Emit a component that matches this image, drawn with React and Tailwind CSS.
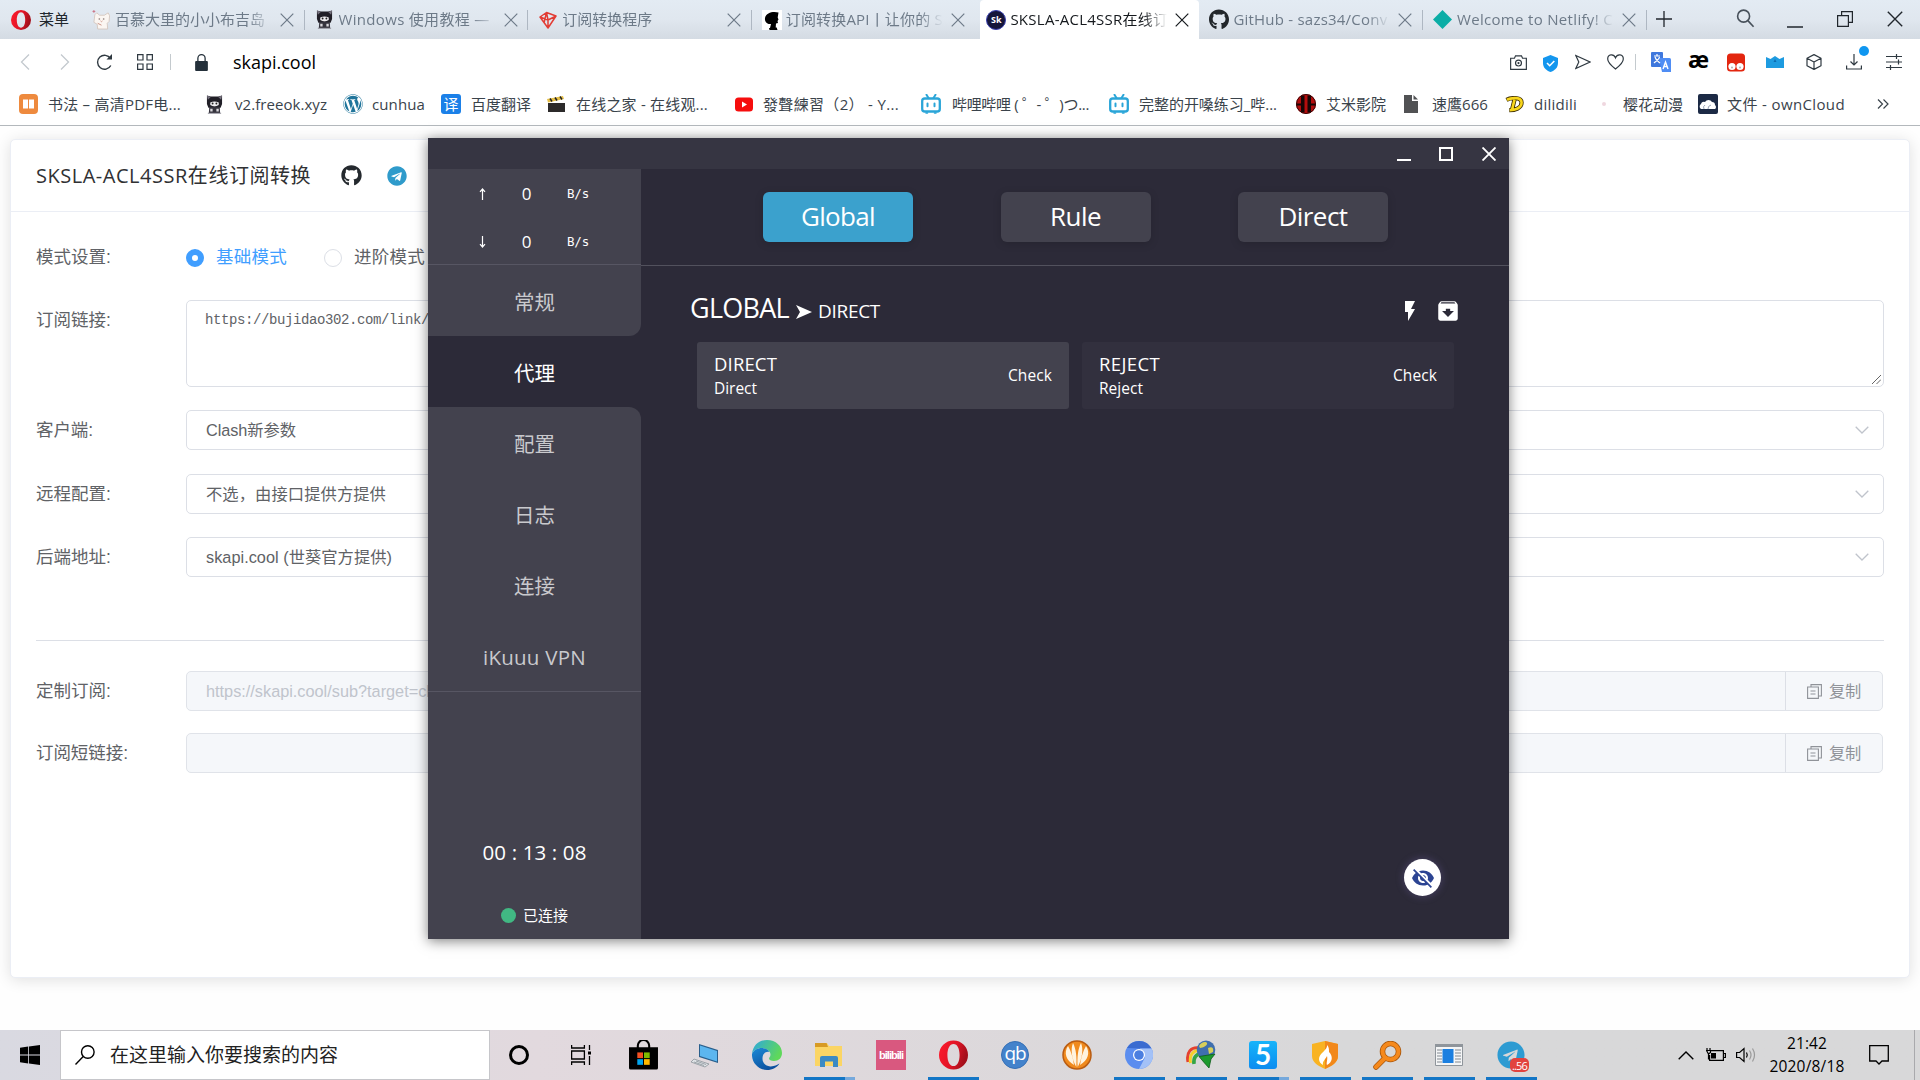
import React, { useLayoutEffect, useRef } from "react";
import { FaGithub, FaWordpress, FaTelegram } from "react-icons/fa";
import { MdFlashOn, MdArchive, MdVisibilityOff } from "react-icons/md";

/* A single line of text whose letter spacing is computed to fill `w` pixels. */
function Fit({ w, className = "", children }) {
  const ref = useRef(null);
  useLayoutEffect(() => {
    const el = ref.current;
    el.style.letterSpacing = "0px";
    const natural = el.getBoundingClientRect().width;
    const count = Array.from(el.textContent).length;
    el.style.letterSpacing = `${(w - natural) / count}px`;
  }, [w, children]);
  return (
    <span ref={ref} className={"inline-block shrink-0 whitespace-pre " + className}>
      {children}
    </span>
  );
}

function Cross({ className = "" }) {
  return (
    <svg viewBox="0 0 14 14" className={className} fill="none" stroke="currentColor" strokeWidth="1.2">
      <path d="M.7.7l12.6 12.6M13.3.7L.7 13.3" />
    </svg>
  );
}

function OperaO({ className }) {
  return (
    <svg viewBox="0 0 30 30" className={className}>
      <defs>
        <linearGradient id="op" x1="0" y1="0" x2="1" y2="0.3">
          <stop offset="0" stopColor="#ff1b2d" />
          <stop offset=".6" stopColor="#e01426" />
          <stop offset="1" stopColor="#a30f1b" />
        </linearGradient>
      </defs>
      <path fillRule="evenodd" fill="url(#op)" d="M15 0a15 15 0 1 0 0 30a15 15 0 1 0 0-30zM15 3.500c4 0 6.300 5 6.300 11.500s-2.300 11.500-6.300 11.500s-6.300-5-6.300-11.500S11 3.500 15 3.500z" />
    </svg>
  );
}

function CatDark({ className }) {
  return (
    <svg viewBox="0 0 18 20" className={className}>
      <path d="M1 .5l4 1h8l4-1v9l-1.500 4h-13L1 9.500z" fill="#211f27" />
      <path d="M1 .5L5 2 2 5zM17 .5L13 2l3 3z" fill="#77737f" />
      <path d="M4.500 8q4.500-2.500 9 0v2.500q-4.500 3-9 0z" fill="#efedf0" />
      <circle cx="7" cy="9" r="1" fill="#222" />
      <circle cx="11" cy="9" r="1" fill="#222" />
      <path d="M3.500 12.500h11l.5 6.500H3z" fill="#35333d" />
      <path d="M4.500 14.500h2.500v3H4.500zM11 14.500h2.500v3H11z" fill="#d9d7dc" />
      <path d="M2 19.300h14" stroke="#8b8994" />
    </svg>
  );
}

function BiliTv() {
  return (
    <svg viewBox="0 0 20 20" className="w-5 h-5" fill="none" stroke="#2aa5d8" strokeLinecap="round">
      <path d="M5.500.8L7.500 4M14.500.8L12.500 4" strokeWidth="2" />
      <rect x="1.200" y="4.500" width="17.600" height="13" rx="2.600" strokeWidth="2.300" />
      <path d="M6.500 9.500v2.800M13.500 9.500v2.800" strokeWidth="2" />
      <path d="M5 19h1.500M13.500 19H15" strokeWidth="1.500" />
    </svg>
  );
}

const tabIcons = {
  whiteCat: (
    <svg viewBox="0 0 20 22" className="w-[19px] h-[21px]">
      <path d="M3 6l2-2 3 2.500h5L17 4l1.500 3-.5 6-2 2 .5 6H6l-.5-5L2 14z" fill="#fbf6f2" stroke="#cfc0b6" strokeWidth=".8" />
      <path d="M7 10.500h1.500M11.500 10.500H13" stroke="#6b5750" strokeWidth="1.200" />
      <path d="M9 12.500l1 .8 1-.8M6 15l4 2" stroke="#c98f82" fill="none" />
      <path d="M2 1v3M.5 2.500h3" stroke="#c96a7d" strokeWidth=".9" />
    </svg>
  ),
  cat: <CatDark className="w-[17px] h-[19px]" />,
  gem: (
    <svg viewBox="0 0 18 18" className="w-[18px] h-[18px]" fill="none" stroke="#e23c34" strokeWidth="1.500" strokeLinejoin="round">
      <path d="M7.500 1.500L17 5 9 17 1 6zM1 6l8 3 8-4M7.500 1.500L9 9v8M7.500 1.500L5 12" />
    </svg>
  ),
  head: (
    <svg viewBox="0 0 20 20" className="w-5 h-5">
      <rect width="20" height="20" fill="#fff" />
      <path d="M16.500 2.500C12 1 4 2 3 8c-.6 4 2.500 6.500 6 6l-1 4h-1l.5 2h8l-.8-2.500h-1l.3-4L16 13l-.5-2 1-1.500-.8-2z" fill="#000" />
    </svg>
  ),
  sk: (
    <span className="flex items-center justify-center w-5 h-5 rounded-full bg-[#15163a] border-[1.5px] border-[#3a40b0] text-white text-[9px] font-bold leading-none">
      Sk
    </span>
  ),
  github: <FaGithub className="w-[21px] h-[21px] text-[#22272b]" />,
  netlify: (
    <svg viewBox="0 0 18 18" className="w-[19px] h-[19px]">
      <path d="M9 0l9 9-9 9-9-9z" fill="#0bada6" />
    </svg>
  ),
};

const tabs = [
  { icon: "whiteCat", text: "百慕大里的小小布吉岛", w: 150 },
  { icon: "cat", text: "Windows 使用教程 —", w: 151 },
  { icon: "gem", text: "订阅转换程序", w: 90 },
  { icon: "head", text: "订阅转换API丨让你的 S", w: 157 },
  { icon: "sk", text: "SKSLA-ACL4SSR在线订", w: 158, active: true },
  { icon: "github", text: "GitHub - sazs34/Conv", w: 154 },
  { icon: "netlify", text: "Welcome to Netlify! C", w: 156 },
];

function TabBar() {
  return (
    <div className="flex h-[39px] shrink-0 bg-linear-to-b from-[#e3ebf3] via-[#e0e7ef] to-[#d4dbe3]">
      <div className="flex items-center w-[81px] pl-[11px] gap-2 text-[15px] text-[#20262c]">
        <OperaO className="w-5 h-5" />
        <Fit w={30}>菜单</Fit>
      </div>
      {tabs.map((t, i) => (
        <div
          key={i}
          className={
            "flex items-center h-[39px] shrink-0 " +
            (t.active
              ? "ml-[5px] w-[219px] bg-white text-[#15191d] rounded-t-sm"
              : "w-[223.6px] text-[#6d7a88]")
          }
        >
          <span className={"flex justify-center w-5 shrink-0 " + (t.active ? "ml-[6px]" : "ml-[10px]")}>{tabIcons[t.icon]}</span>
          <span className="ml-1 mr-[8px] w-[157px] shrink-0 overflow-hidden text-[15px] leading-none py-1 mask-r-from-85%">
            <Fit w={t.w}>{t.text}</Fit>
          </span>
          <Cross className="w-[14px] h-[14px] shrink-0" />
          {!t.active && i !== 3 && <span className="ml-auto w-px h-5 bg-[#aeb7c2]" />}
        </div>
      ))}
      <div className="flex items-center flex-1 text-[#20262c]">
        <svg viewBox="0 0 16 16" className="w-4 h-4 ml-[9px] mb-px" stroke="currentColor" strokeWidth="1.300">
          <path d="M8 0v16M0 8h16" />
        </svg>
        <svg viewBox="0 0 20 20" className="w-[19px] h-[19px] ml-16 mb-[3px]" fill="none" stroke="#47505a" strokeWidth="1.700">
          <circle cx="8" cy="7.500" r="6.300" />
          <path d="M12.500 12.200l6 6.500" />
        </svg>
        <svg viewBox="0 0 16 16" className="w-4 h-4 ml-8" stroke="currentColor" strokeWidth="1.500">
          <path d="M0 15h16" />
        </svg>
        <svg viewBox="0 0 16 16" className="w-4 h-4 ml-[34px] mb-[1px]" fill="none" stroke="currentColor" strokeWidth="1.200">
          <path d="M.6 4.600h10.800v10.800H.6zM4.600 4.600V.6h10.800v10.800h-4" />
        </svg>
        <Cross className="w-4 h-4 ml-[34px] mb-[1px]" />
      </div>
    </div>
  );
}

function AddressBar() {
  return (
    <div className="flex items-center h-[47px] shrink-0 bg-white text-[#2f3941] pb-px">
      <svg viewBox="0 0 10 16" className="w-[10px] h-4 ml-5" fill="none" stroke="#c3c9ce" strokeWidth="1.300">
        <path d="M9 .5L1.500 8 9 15.500" />
      </svg>
      <svg viewBox="0 0 10 16" className="w-[10px] h-4 ml-[30px]" fill="none" stroke="#c3c9ce" strokeWidth="1.300">
        <path d="M1 .5L8.500 8 1 15.500" />
      </svg>
      <svg viewBox="0 0 17 17" className="w-[17px] h-[17px] ml-[26px]" fill="none" stroke="currentColor" strokeWidth="1.400">
        <path d="M14.800 11.500A7 7 0 1 1 14.500 4.500" />
        <path d="M10.500 5.500H16V0z" fill="currentColor" stroke="none" />
      </svg>
      <svg viewBox="0 0 16 16" className="w-4 h-4 ml-6" fill="none" stroke="currentColor" strokeWidth="1.200">
        <path d="M.6.6h5.400v5.400H.6zM10 .6h5.400v5.400H10zM.6 10h5.400v5.400H.6zM10 10h5.400v5.400H10z" />
      </svg>
      <span className="w-px h-4 ml-[17px] bg-[#c4cace]" />
      <svg viewBox="0 0 12 16" className="w-[13px] h-[17px] ml-6">
        <rect y="6.500" width="12" height="9.500" rx="1" fill="#24303a" />
        <path d="M2.600 7V4a3.400 3.400 0 0 1 6.800 0v3" fill="none" stroke="#24303a" strokeWidth="1.200" />
      </svg>
      <span className="ml-[25px] text-[18px] leading-none text-black">
        <Fit w={83}>skapi.cool</Fit>
      </span>
      <div className="ml-auto flex items-center">
        <svg viewBox="0 0 16 14" className="w-[17px] h-[15px]" fill="none" stroke="currentColor" strokeWidth="1.100">
          <path d="M.6 3h3.600l1-2.300h5.600l1 2.300h3.600v10.400H.6z" />
          <circle cx="8" cy="7.500" r="2.800" />
          <circle cx="8" cy="7.500" r=".5" />
        </svg>
        <svg viewBox="0 0 15 17" className="w-[15px] h-[17px] ml-4 mt-[2px]">
          <path d="M7.500 0l7.500 3v5c0 5-3.500 7.600-7.500 9C3.500 15.600 0 13 0 8V3z" fill="#1496ee" />
          <path d="M4 8l2.700 2.700L11.300 6" stroke="#fff" strokeWidth="1.600" fill="none" />
        </svg>
        <svg viewBox="0 0 16 16" className="w-4 h-4 ml-[17px]" fill="none" stroke="currentColor" strokeWidth="1.200">
          <path d="M.8 1.500L15 8 .8 14.500 3.800 8z" />
        </svg>
        <svg viewBox="0 0 17 16" className="w-[17px] h-4 ml-4" fill="none" stroke="currentColor" strokeWidth="1.200">
          <path d="M8.500 15C4 11.500.7 8.500.7 5c0-5 6-5.600 7.800-1.200C10.300-.6 16.300 0 16.300 5c0 3.500-3.300 6.500-7.800 10z" />
        </svg>
        <span className="w-px h-4 ml-[11px] bg-[#c4cace]" />
        <svg viewBox="0 0 20 20" className="w-5 h-5 ml-[15px]">
          <rect width="12" height="15" rx="1" fill="#3f78dd" />
          <path d="M8 6h10.500a1.500 1.500 0 0 1 1.500 1.500V20H11z" fill="#4f8df4" />
          <path d="M3 4h6M6 2v2M4 5c1 4 4 5 5 6M8.500 5C8 8 4 10 3 11" stroke="#fff" strokeWidth="1.200" fill="none" />
          <path d="M12 17l2.500-7 2.500 7M13 14.500h3" stroke="#fff" strokeWidth="1.400" fill="none" />
        </svg>
        <span className="ml-[17px] w-5 -mt-[5px] text-[23px] leading-none font-bold text-black tracking-[-1px]">æ</span>
        <svg viewBox="0 0 18 18" className="w-[18px] h-[19px] ml-[19px]">
          <rect width="18" height="18" rx="3.500" fill="#e3260f" />
          <circle cx="5" cy="13" r="3.600" fill="#fff" />
          <circle cx="13" cy="13" r="3.600" fill="#fff" />
          <circle cx="5" cy="14" r=".9" fill="#aaa" />
          <circle cx="13" cy="14" r=".9" fill="#aaa" />
        </svg>
        <svg viewBox="0 0 18 12" className="w-[18px] h-[14px] ml-[21px]">
          <path d="M0 1l4.500 2L9 0l4.500 3L18 1v11H0z" fill="#1e9be0" />
          <path d="M9 3l1.500 3H7.500z" fill="#0c6cb0" />
        </svg>
        <svg viewBox="0 0 16 16" className="w-4 h-4 ml-[22px]" fill="none" stroke="currentColor" strokeWidth="1.200" strokeLinejoin="round">
          <path d="M8 .6l7 3.700v7.400L8 15.400l-7-3.700V4.300zM1 4.300L8 8l7-3.700M8 8v7.400" />
        </svg>
        <span className="relative ml-[24px]">
          <svg viewBox="0 0 16 16" className="w-4 h-4" fill="none" stroke="currentColor" strokeWidth="1.200">
            <path d="M8 0v10.500M4.500 7.500L8 11l3.500-3.500M.6 11.500v3.500h14.800v-3.500" />
          </svg>
          <span className="absolute -top-[8px] left-[13px] w-[10px] h-[10px] rounded-full bg-[#0f96f0]" />
        </span>
        <svg viewBox="0 0 16 16" className="w-4 h-4 ml-6 mr-[18px]" fill="none" stroke="currentColor" strokeWidth="1.200">
          <path d="M0 2.500h16M0 8h16M0 13.500h16M10.500 0v5M12.500 5.500v5M4.500 11v5" />
        </svg>
      </div>
    </div>
  );
}

const bookmarks = [
  {
    cls: "w-[187px]", gap: "ml-[10px]", text: "书法 – 高清PDF电...", w: 133,
    icon: (
      <svg viewBox="0 0 19 20" className="w-[19px] h-5">
        <rect width="19" height="20" rx="4" fill="#ee8a3e" />
        <path d="M4 5.500h5v9H4zM10 5.500h5v9h-5z" fill="#fff" />
      </svg>
    ),
  },
  { cls: "w-[137px]", gap: "ml-[12px]", text: "v2.freeok.xyz", w: 92, icon: <CatDark className="w-[17px] h-[19px]" /> },
  { cls: "w-[98px]", gap: "ml-[9px]", text: "cunhua", w: 53, icon: <FaWordpress className="w-5 h-5 text-[#21759b]" /> },
  {
    cls: "w-[106px]", gap: "ml-[10px]", text: "百度翻译", w: 60,
    icon: <span className="flex items-center justify-center w-5 h-5 rounded-[3px] bg-[#1b80e8] text-white text-[15px] leading-none">译</span>,
  },
  {
    cls: "w-[188px]", gap: "ml-[11px]", text: "在线之家 - 在线观...", w: 132,
    icon: (
      <svg viewBox="0 0 18 16" className="w-[18px] h-4">
        <path d="M1 7h17v9H1z" fill="#2c2a2a" />
        <path d="M0 3l16-3 1 3L1 6.500z" fill="#e6bf45" />
        <path d="M3 2.500l2 3M8 1.500l2 3M13 .5l2 3" stroke="#222" strokeWidth="1.500" />
      </svg>
    ),
  },
  {
    cls: "w-[186px]", gap: "ml-[10px]", text: "發聲練習（2） - Y...", w: 136,
    icon: (
      <svg viewBox="0 0 18 14" className="w-[18px] h-[15px]">
        <rect width="18" height="14" rx="3.500" fill="#f60d0d" />
        <path d="M7 4l5 3-5 3z" fill="#fff" />
      </svg>
    ),
  },
  { cls: "w-[188px]", gap: "ml-[11px]", text: "哔哩哔哩 ( ゜- ゜)つ...", w: 137, icon: <BiliTv /> },
  { cls: "w-[187px]", gap: "ml-[10px]", text: "完整的开嗓练习_哔...", w: 138, icon: <BiliTv /> },
  {
    cls: "w-[108px]", gap: "ml-[10px]", text: "艾米影院", w: 60,
    icon: (
      <svg viewBox="0 0 20 20" className="w-5 h-5">
        <circle cx="10" cy="10" r="10" fill="#b50d0d" />
        <path d="M5 1.500h3.500v17H5zM11.500 1.500H15v17h-3.500z" fill="#180606" />
        <path d="M0 9.500h5v2H0zM15 9.500h5v2h-5z" fill="#180606" />
        <circle cx="10" cy="10" r="9.500" stroke="#3a0808" fill="none" />
      </svg>
    ),
  },
  {
    cls: "w-[101px]", gap: "ml-[14px]", text: "速鹰666", w: 56,
    icon: (
      <svg viewBox="0 0 14 18" className="w-[14px] h-[18px]">
        <path d="M0 0h8v6h6v12H0z" fill="#515254" />
        <path d="M9.500 0L14 4.500H9.500z" fill="#515254" />
      </svg>
    ),
  },
  {
    cls: "w-[97px]", gap: "ml-[10px]", text: "dilidili", w: 43,
    icon: (
      <svg viewBox="0 0 20 18" className="w-[19px] h-[17px]" fill="none">
        <path d="M1.500 4c5-2.500 16-3 16 3s-7 8-13 8M10 4L7.500 14" stroke="#3c2c04" strokeWidth="4.500" />
        <path d="M2 4c5-2.500 15.500-3 15.500 3s-7 8-12.500 8M10 4L7.500 14" stroke="#f8d61c" strokeWidth="2.800" />
      </svg>
    ),
  },
  { cls: "w-[96px]", gap: "ml-[17px]", text: "樱花动漫", w: 60, icon: <span className="w-[4px] h-[4px] rounded-full bg-[#efd7df]" /> },
  {
    cls: "w-[179px]", gap: "ml-[9px]", text: "文件 - ownCloud", w: 118,
    icon: (
      <svg viewBox="0 0 20 20" className="w-5 h-5">
        <rect width="20" height="20" rx="2" fill="#1c2a45" />
        <path d="M3 15a3 3 0 0 1 0-5 3 3 0 0 1 4-2 4 4 0 0 1 7 0 3 3 0 0 1 3 3 2.500 2.500 0 0 1 0 4z" fill="#fff" />
        <path d="M6 15a3 3 0 0 1 1-4M10 15a4 4 0 0 1 3-4" stroke="#9aa5b8" fill="none" />
      </svg>
    ),
  },
];

function Bookmarks() {
  return (
    <div className="flex items-center h-[40px] pb-[3px] shrink-0 bg-white border-b border-[#b3b8bc] pl-[19px] text-[15px] leading-none text-[#3a434b]">
      {bookmarks.map((b, i) => (
        <div key={i} className={"flex items-center shrink-0 " + b.cls}>
          {b.icon}
          <span className={b.gap}>
            <Fit w={b.w}>{b.text}</Fit>
          </span>
        </div>
      ))}
      <svg viewBox="0 0 12 10" className="w-3 h-[10px]" fill="none" stroke="currentColor" strokeWidth="1.200">
        <path d="M1 .5L5.500 5 1 9.500M6.500.5L11 5 6.500 9.500" />
      </svg>
    </div>
  );
}

function Row({ label, w = 75, className = "", children }) {
  return (
    <div className={"flex " + className}>
      <div className="flex items-center w-[150px] h-10 pt-px shrink-0 text-[17.500px] text-[#606266]">
        <Fit w={w}>{label}</Fit>
      </div>
      {children}
    </div>
  );
}

function Select({ children }) {
  return (
    <div className="flex items-center justify-between flex-1 h-10 pl-[19px] pr-[14px] border border-[#dcdfe6] rounded-[5px] bg-white text-[16.300px] text-[#606266]">
      {children}
      <svg viewBox="0 0 14 8" className="w-[14px] h-2" fill="none" stroke="#c0c4cc" strokeWidth="1.300">
        <path d="M.7.7L7 7 13.300.7" />
      </svg>
    </div>
  );
}

function CopyInput({ children }) {
  return (
    <div className="flex flex-1 mr-px h-10 border border-[#e0e3e9] rounded-[5px] bg-[#f5f7fa] text-[16.300px]">
      <div className="flex items-center flex-1 pl-[19px] text-[#c0c4cc]">{children}</div>
      <div className="flex items-center w-[97px] pl-[21px] border-l border-[#dcdfe6] text-[#909399]">
        <svg viewBox="0 0 15 15" className="w-[15px] h-[15px] mr-[7px]" fill="none" stroke="currentColor" strokeWidth="1.100">
          <path d="M.6 3h10.800v11.400H.6zM4 3V.6h10.400v11.400h-3M3.500 7h5M3.500 10h5" />
        </svg>
        <Fit w={32}>复制</Fit>
      </div>
    </div>
  );
}

function ConverterPage() {
  return (
    <div className="flex-1 bg-[#fefefe] px-[10px] pt-[13px]">
      <div className="h-[839px] bg-white rounded-[5px] border border-[#ebeef5] shadow-[0_2px_15px_rgba(0,0,0,0.12)] font-['Liberation_Sans','Noto_Sans_CJK_SC',sans-serif]">
        <div className="flex items-center h-[72px] pl-[25px] border-b border-[#ebeef5] text-[20px] text-[#303133] font-['Open_Sans','Noto_Sans_CJK_SC',sans-serif]">
          <Fit w={275}>SKSLA-ACL4SSR在线订阅转换</Fit>
          <FaGithub className="w-[21px] h-[21px] ml-[30px] text-[#24292e]" />
          <FaTelegram className="w-5 h-5 ml-[25px] text-[#2f9bcb]" />
        </div>
        <div className="px-[25px]">
          <Row label="模式设置:" className="mt-[25px]">
            <div className="flex items-center pt-px text-[17.500px] text-[#606266]">
              <span className="w-[18px] h-[18px] rounded-full border-[6px] border-[#409eff] bg-white" />
              <span className="ml-3 text-[#409eff]"><Fit w={71}>基础模式</Fit></span>
              <span className="w-[18px] h-[18px] ml-[37px] rounded-full border border-[#dcdfe6]" />
              <span className="ml-3"><Fit w={71}>进阶模式</Fit></span>
            </div>
          </Row>
          <Row label="订阅链接:" className="mt-[23px]">
            <div className="flex flex-1 items-end h-[87px] border border-[#dcdfe6] rounded-[5px]">
              <span className="self-start flex-1 pl-[18px] pt-[9px] text-[14px] text-[#606266] font-['Liberation_Mono',monospace]">
                <Fit w={224}>https://bujidao302.com/link/</Fit>
              </span>
              <svg viewBox="0 0 9 9" className="w-[9px] h-[9px] mr-[2px] mb-[2px]" stroke="#555" strokeWidth=".9">
                <path d="M0 9l9-9M4.500 9L9 4.500" />
              </svg>
            </div>
          </Row>
          <Row label="客户端:" w={57} className="mt-[23px]">
            <Select><Fit w={90}>Clash新参数</Fit></Select>
          </Row>
          <Row label="远程配置:" className="mt-6">
            <Select><Fit w={180}>不选，由接口提供方提供</Fit></Select>
          </Row>
          <Row label="后端地址:" className="mt-[23px]">
            <Select><Fit w={186}>skapi.cool (世葵官方提供)</Fit></Select>
          </Row>
          <div className="h-px mt-[63px] mb-[30px] bg-[#dcdfe6]" />
          <Row label="定制订阅:">
            <CopyInput><Fit w={233}>https://skapi.cool/sub?target=cla</Fit></CopyInput>
          </Row>
          <Row label="订阅短链接:" w={92} className="mt-[22px]">
            <CopyInput />
          </Row>
        </div>
      </div>
    </div>
  );
}

function Speed({ arrow }) {
  return (
    <div className="flex items-center h-12 pt-[2px]">
      <svg viewBox="0 0 7 12" className={"w-[7px] h-3 ml-[51px] " + (arrow === "down" ? "rotate-180" : "")} fill="none" stroke="#fff" strokeWidth="1.200">
        <path d="M3.500 12V1M1 3.800L3.500 1 6 3.800" />
      </svg>
      <span className="w-[81px] text-center text-[17px]">0</span>
      <span className="text-[12.500px] font-['DejaVu_Sans_Mono',monospace]"><Fit w={22}>B/s</Fit></span>
    </div>
  );
}

function NavItem({ children, w, state }) {
  const shape =
    state === "active" ? "bg-[#2c2a38] text-white" :
    state === "above" ? "bg-[#43424e] rounded-br-[12px] text-[#c9c9cd]" :
    state === "below" ? "bg-[#43424e] rounded-tr-[12px] text-[#c9c9cd]" :
    "bg-[#43424e] text-[#c9c9cd]";
  return (
    <div className={"flex items-center justify-center h-[71px] pt-[3px] text-[20.500px] " + shape}>
      <Fit w={w}>{children}</Fit>
    </div>
  );
}

function ProxyCard({ name, type, nameW, typeW, className }) {
  return (
    <div className={"flex items-center justify-between w-[372px] h-[67px] px-[17px] rounded-[3px] " + className}>
      <div className="flex flex-col leading-none pt-[2px]">
        <span className="text-[18.500px] leading-[24px]"><Fit w={nameW}>{name}</Fit></span>
        <span className="text-[15.500px] leading-[25px]"><Fit w={typeW}>{type}</Fit></span>
      </div>
      <span className="text-[15.500px] pt-px"><Fit w={44}>Check</Fit></span>
    </div>
  );
}

function ClashWindow() {
  return (
    <div className="absolute left-[428px] top-[138px] flex flex-col w-[1081px] h-[801px] bg-[#2c2a38] text-white shadow-[0_2px_12px_rgba(0,0,0,0.5)]">
      <div className="flex items-center justify-end h-[31px] shrink-0 bg-[#363542]">
        <span className="w-[14px] h-[2px] mt-3 bg-white" />
        <span className="w-[14px] h-[14px] ml-7 border-2 border-white" />
        <svg viewBox="0 0 14 14" className="w-[14px] h-[14px] ml-[29px] mr-[13px]" stroke="#fff" strokeWidth="1.900">
          <path d="M.5.5l13 13M13.500.5l-13 13" />
        </svg>
      </div>
      <div className="flex flex-1">
        <div className="flex flex-col w-[213px] shrink-0">
          <div className="h-[96px] bg-[#43424e] border-b border-[#575663]">
            <Speed arrow="up" />
            <Speed arrow="down" />
          </div>
          <NavItem w={41} state="above">常规</NavItem>
          <NavItem w={41} state="active">代理</NavItem>
          <NavItem w={41} state="below">配置</NavItem>
          <NavItem w={41}>日志</NavItem>
          <NavItem w={41}>连接</NavItem>
          <NavItem w={103}>iKuuu VPN</NavItem>
          <div className="flex flex-col items-center flex-1 bg-[#43424e] border-t border-[#575663]">
            <span className="mt-[145px] text-[20.500px] leading-[30px]"><Fit w={104}>00 : 13 : 08</Fit></span>
            <div className="flex items-center gap-[7px] mt-[37px] text-[15px]">
              <span className="w-[15px] h-[15px] rounded-full bg-[#41b883]" />
              <Fit w={45}>已连接</Fit>
            </div>
          </div>
        </div>
        <div className="relative flex-1">
          <div className="flex h-[97px] pl-[122px] gap-[87.500px] pt-[23px] border-b border-[#52515d] text-[26px] leading-none">
            <span className="flex items-center justify-center w-[150px] h-[50px] pb-[2px] rounded-md bg-[#3ba1cd] shadow-[0_2px_8px_rgba(0,0,0,0.15)]"><Fit w={74}>Global</Fit></span>
            <span className="flex items-center justify-center w-[150px] h-[50px] pb-[2px] rounded-md bg-[#43424e] shadow-[0_2px_8px_rgba(0,0,0,0.15)]"><Fit w={51}>Rule</Fit></span>
            <span className="flex items-center justify-center w-[150px] h-[50px] pb-[2px] rounded-md bg-[#43424e] shadow-[0_2px_8px_rgba(0,0,0,0.15)]"><Fit w={69}>Direct</Fit></span>
          </div>
          <div className="flex items-baseline h-[76px] pl-[49px] pt-[22px] text-[27px]">
            <Fit w={99}>GLOBAL</Fit>
            <svg viewBox="0 0 16 14" className="w-4 h-[14px] ml-[7px] translate-y-px" fill="#fff">
              <path d="M0 0l16 7-16 7 4-7z" />
            </svg>
            <span className="ml-[6px] text-[19px]"><Fit w={62}>DIRECT</Fit></span>
            <MdFlashOn className="w-6 h-6 ml-auto self-start mt-[11px]" />
            <MdArchive className="w-[26px] h-[26px] ml-[13px] mr-[48px] self-start mt-[10px]" />
          </div>
          <div className="flex gap-[13px] pl-[56px]">
            <ProxyCard name="DIRECT" type="Direct" nameW={63} typeW={43} className="bg-[#43424e]" />
            <ProxyCard name="REJECT" type="Reject" nameW={61} typeW={44} className="bg-[#32303e]" />
          </div>
          <div className="absolute right-[68px] bottom-[43px] flex items-center justify-center w-[37px] h-[37px] rounded-full bg-white shadow-[0_0_6px_2px_rgba(90,80,130,0.4)]">
            <MdVisibilityOff className="w-6 h-6 text-[#2c4493]" />
          </div>
        </div>
      </div>
    </div>
  );
}

const apps = [
  { icon: <span className="w-5 h-5 rounded-full border-[3px] border-black" /> },
  {
    icon: (
      <svg viewBox="0 0 20 20" className="w-5 h-5" fill="none" stroke="#000" strokeWidth="1.300">
        <path d="M.6 0v3h12.800V0M.6 20v-3h12.800v3M.6 6h12.800v8H.6zM18.500 0v5M18.500 11v9" />
        <path d="M17 6.500h3v3h-3z" fill="#000" stroke="none" />
      </svg>
    ),
  },
  {
    icon: (
      <svg viewBox="0 0 28 29" className="w-[29px] h-[30px]">
        <path d="M8.500 8V5.500a5.500 5.500 0 0 1 11 0V8" fill="none" stroke="#000" strokeWidth="2" />
        <path d="M0 7h28v20a1.500 1.500 0 0 1-1.500 1.500h-25A1.500 1.500 0 0 1 0 27z" fill="#000" />
        <path d="M8 12h5.500v5.500H8z" fill="#f25022" />
        <path d="M14.500 12H20v5.500h-5.500z" fill="#7fba00" />
        <path d="M8 18.500h5.500V24H8z" fill="#00a4ef" />
        <path d="M14.500 18.500H20V24h-5.500z" fill="#ffb900" />
      </svg>
    ),
  },
  {
    icon: (
      <svg viewBox="0 0 28 28" className="w-7 h-7">
        <path d="M8 3l19 6v13L8 16z" fill="#2a5f8c" />
        <path d="M9 4.500l17 5.500v10.500L9 15z" fill="#5cb6ef" />
        <path d="M3 18l15 5-4 3L0 21z" fill="#dfe3e6" stroke="#8d959c" strokeWidth=".8" />
        <path d="M5 20l10 3.500M3 21l10 3.500" stroke="#8d959c" strokeWidth=".8" />
      </svg>
    ),
  },
  {
    icon: (
      <svg viewBox="0 0 30 30" className="w-[30px] h-[30px]">
        <defs>
          <linearGradient id="eg1" x1="0" y1="0" x2="1" y2=".4"><stop offset="0" stopColor="#2da7e0" /><stop offset="1" stopColor="#5fd85b" /></linearGradient>
          <linearGradient id="eg2" x1="0" y1="0" x2=".6" y2="1"><stop offset="0" stopColor="#1b8ad6" /><stop offset="1" stopColor="#0c4f9e" /></linearGradient>
        </defs>
        <path d="M0 14C1 5 7 0 15 0c9 0 15 6 15 13 0 5-3.500 8-8 8-3 0-5-1-5-2.500 0-1 1.500-1.500 1.500-4C18.500 11 14 8 9.500 8 5 8 1.500 10.500 0 14z" fill="url(#eg1)" />
        <path d="M0 14C1.500 10 6 8 9.500 8c4 0 7 2 8 4-4-1-7 2-7 6.500 0 6 5.500 9 11 7.500 3-.7 5-1.800 6-2.500-2.500 4-7 6.500-12.500 6.500C7 30-.5 23 0 14z" fill="url(#eg2)" />
      </svg>
    ),
  },
  {
    run: true,
    more: true,
    icon: (
      <svg viewBox="0 0 28 24" className="w-7 h-6">
        <path d="M0 0h12l2 3h13v20H0z" fill="#fbd564" />
        <path d="M0 0h11.500l1.500 4H0z" fill="#d79a24" />
        <path d="M5 24V15a2 2 0 0 1 2-2h14a2 2 0 0 1 2 2v9h-5v-5.500h-8V24z" fill="#3b8ac4" />
      </svg>
    ),
  },
  {
    icon: <span className="flex items-center justify-center w-[30px] h-[30px] bg-[#d9587f] text-white text-[11px] font-bold leading-none font-['Liberation_Sans',sans-serif]"><Fit w={24}>bilibili</Fit></span>,
  },
  { run: true, icon: <OperaO className="w-[29px] h-[30px]" /> },
  {
    icon: <span className="flex items-center justify-center w-[28px] h-[28px] rounded-full bg-[#4382cb] border border-[#356fb5] text-white text-[19px] leading-none pb-1"><Fit w={21}>qb</Fit></span>,
  },
  {
    icon: (
      <svg viewBox="0 0 30 30" className="w-[30px] h-[30px]">
        <circle cx="15" cy="15" r="14" fill="#f08a1d" stroke="#b95c12" strokeWidth="1.500" />
        <path d="M12 25C4 20 1.500 13 6 6c3 5 5 12 6 19zM14.300 27C9.500 18 8.500 9 11 3c3 6 4 14 3.300 24zM15.700 27c4.800-9 5.800-18 3.300-24-3 6-4 14-3.300 24zM18 25c8-5 10.500-12 6-19-3 5-5 12-6 19z" fill="#fff3df" />
      </svg>
    ),
  },
  {
    run: true,
    icon: (
      <svg viewBox="0 0 28 28" className="w-7 h-7">
        <circle cx="14" cy="14" r="14" fill="#5b8def" />
        <path d="M2 7a14 14 0 0 1 24.500.5H14z" fill="#3a6bd0" />
        <path d="M14 28a14 14 0 0 0 12.500-20.500H15l5 9z" fill="#a3c1f7" />
        <circle cx="14" cy="14" r="6" fill="#fff" />
        <circle cx="14" cy="14" r="4.800" fill="#4a7ee0" />
      </svg>
    ),
  },
  {
    run: true,
    icon: (
      <svg viewBox="0 0 30 30" className="w-[30px] h-[30px]">
        <path d="M2 22C0 12 5 7 13 8" fill="none" stroke="#e5412d" strokeWidth="3" />
        <path d="M4.500 23C3 14 8 10 14 10.500" fill="none" stroke="#f5cf2b" strokeWidth="3" />
        <path d="M8 24c-1-6 2-10 8-11" fill="none" stroke="#35a545" strokeWidth="3.500" />
        <circle cx="20" cy="9.800" r="9.300" fill="#3f6fae" />
        <path d="M13 6c2-4 7-5 8-3s-4 5-7 5zM22 8c4-2 6 0 5 4l-4 2z" fill="#d7cf5b" />
        <path d="M13 16.500l16-2.500-4 5-2 9-4.500-5z" fill="#1c9a2e" stroke="#0c5c18" strokeWidth=".8" />
      </svg>
    ),
  },
  {
    run: true,
    more: true,
    icon: <span className="flex items-center justify-center w-[28px] h-[28px] rounded-[3px] bg-linear-to-b from-[#18b4fa] to-[#0d8cf0] text-white text-[28px] font-bold leading-none pb-[2px] font-['Lato',sans-serif]">5</span>,
  },
  {
    run: true,
    icon: (
      <svg viewBox="0 0 26 28" className="w-[26px] h-7">
        <path d="M13 0l13 3v12c0 6-6 10-13 13C6 25 0 21 0 15V3z" fill="#f9b322" />
        <path d="M13 0l13 3v12c0 6-6 10-13 13z" fill="#f2881a" />
        <path d="M15 4c1 5-8 8-8 14 0 3 2 5 4 6-1-4 3-6 4-9 1 3-1 7 0 9 6-3 6-9 2-13 0-3 0-5-2-7z" fill="#fff" />
      </svg>
    ),
  },
  {
    run: true,
    icon: (
      <svg viewBox="0 0 29 29" className="w-[29px] h-[29px]" fill="none">
        <path d="M12 17L3 26" stroke="#a8560c" strokeWidth="5.500" strokeLinecap="round" />
        <circle cx="17.500" cy="10.500" r="8" stroke="#a8560c" strokeWidth="5.500" />
        <path d="M12 17L3 26" stroke="#f5891c" strokeWidth="4" strokeLinecap="round" />
        <circle cx="17.500" cy="10.500" r="8" stroke="#f5891c" strokeWidth="4" />
      </svg>
    ),
  },
  {
    run: true,
    icon: (
      <svg viewBox="0 0 28 22" className="w-7 h-[22px]">
        <path d="M.5.500h27v21H.5z" fill="#f4f5f6" stroke="#8f959b" />
        <path d="M0 0h28v3H0z" fill="#8f959b" />
        <path d="M2 6h5M2 9h5M2 12h5M2 15h5M2 18h5M20 6h6M20 9h6M20 12h6M20 15h6M20 18h6" stroke="#a8adb2" strokeWidth="1.300" />
        <path d="M7.500 5h11v14h-11z" fill="#1b7fe0" />
      </svg>
    ),
  },
  {
    run: true,
    icon: (
      <span className="relative">
        <FaTelegram className="w-[28px] h-[28px] text-[#2d9bd2]" />
        <span className="absolute left-[13px] top-[17px] flex items-center justify-center w-[19px] h-[14px] rounded-[5px] bg-[#e2433f] text-white text-[11px] leading-none">
          <Fit w={15}>..56</Fit>
        </span>
      </span>
    ),
  },
];

function Taskbar() {
  return (
    <div className="flex h-[50px] shrink-0 bg-linear-to-r from-[#d9d9e1] via-[#e2d9de] via-28% to-[#d8d8d9] to-70% text-black">
      <div className="flex items-center justify-center w-[60px]">
        <svg viewBox="0 0 20 20" className="w-5 h-5" fill="#000">
          <path d="M0 2.800l8.200-1.200v8H0zM9 1.500L20 0v9.600H9zM0 10.400h8.200v8L0 17.200zM9 10.400h11V20L9 18.500z" />
        </svg>
      </div>
      <div className="flex items-center w-[430px] h-[50px] bg-white border border-[#c6c6ca] pl-[14px]">
        <svg viewBox="0 0 20 20" className="w-5 h-5" fill="none" stroke="#000" strokeWidth="1.400">
          <circle cx="12.800" cy="7" r="6.300" />
          <path d="M8.200 11.500L.5 19.500" />
        </svg>
        <span className="ml-[15px] text-[19px] leading-none text-[#222]"><Fit w={228}>在这里输入你要搜索的内容</Fit></span>
      </div>
      <div className="flex -ml-[2px]">
        {apps.map((a, i) => (
          <div key={i} className="flex flex-col items-center w-[62px] shrink-0">
            <div className="flex items-center flex-1 pt-[3px]">{a.icon}</div>
            <div className="flex w-[51px] h-[3px]">
              {a.run && <span className="flex-1 bg-[#1376c6]" />}
              {a.run && a.more && <span className="w-[10px] bg-[#76a9dc]" />}
            </div>
          </div>
        ))}
      </div>
      <div className="flex items-center flex-1 pl-[136px]">
        <svg viewBox="0 0 16 9" className="w-4 h-[9px]" fill="none" stroke="#000" strokeWidth="1.400">
          <path d="M.7 8.300L8 1l7.300 7.300" />
        </svg>
        <svg viewBox="0 0 20 14" className="w-5 h-[14px] ml-3" fill="none" stroke="#000" strokeWidth="1.200">
          <path d="M5 2.600h12.400v9.800H3.600V7M17.400 5.500h2v4h-2M1 0v2M4 0v2M.5 2.500h4v2l-2 1.500zM2.500 6v5h1" />
          <path d="M5 5h5v5.500H5z" fill="#000" stroke="none" />
        </svg>
        <svg viewBox="0 0 20 16" className="w-5 h-4 ml-[10px]" fill="none" stroke="#000" strokeWidth="1.200">
          <path d="M.6 5.500h3L8 1.500v13l-4.400-4h-3zM10.500 5.500q1.500 2.500 0 5" />
          <path d="M13.500 3.500q3 4.500 0 9M16.500 1.500q4 6.500 0 13" stroke="#999" />
        </svg>
        <div className="flex flex-col items-center w-[76px] ml-[13px] pb-px text-[15.500px] leading-[23px]">
          <Fit w={40}>21:42</Fit>
          <Fit w={75}>2020/8/18</Fit>
        </div>
        <svg viewBox="0 0 20 20" className="w-5 h-5 ml-[24px]" fill="none" stroke="#000" strokeWidth="1.300">
          <path d="M.7.7h18.600v15.300H13L10 19l-3-3H.7z" />
        </svg>
        <span className="w-px h-full ml-auto mr-[5px] bg-[#a9a9ac]" />
      </div>
    </div>
  );
}

export default function App() {
  return (
    <div className="relative flex flex-col w-[1920px] h-[1080px] overflow-hidden bg-white font-['Open_Sans','Noto_Sans_CJK_SC',sans-serif]">
      <TabBar />
      <AddressBar />
      <Bookmarks />
      <ConverterPage />
      <Taskbar />
      <ClashWindow />
    </div>
  );
}
